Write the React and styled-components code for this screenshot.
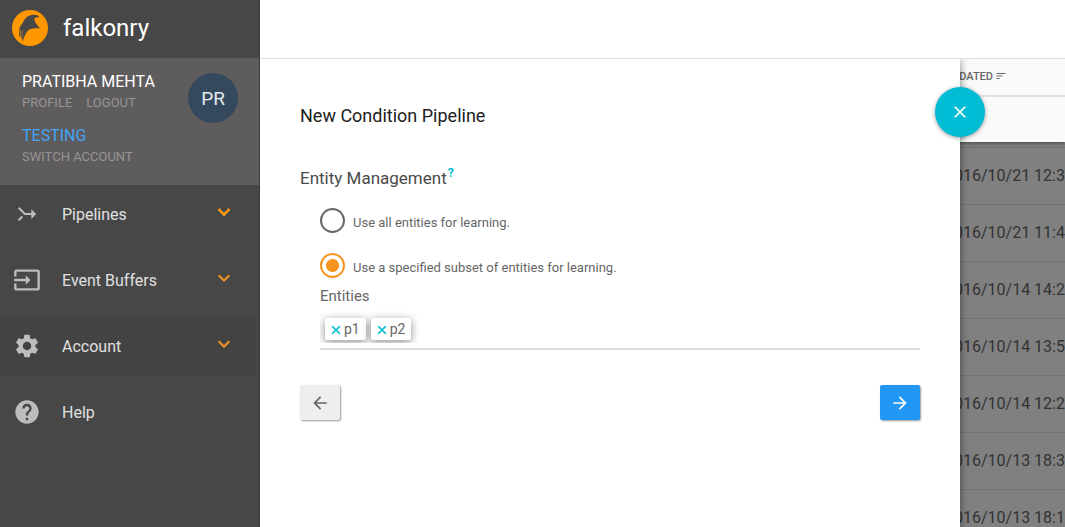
import React, { useState } from "react";
import styled, { createGlobalStyle, css } from "styled-components";
import {
  MdArrowBack,
  MdArrowForward,
  MdCallMerge,
  MdClose,
  MdExpandMore,
  MdHelp,
  MdInput,
  MdSettings,
  MdSort,
} from "react-icons/md";

const GlobalStyle = createGlobalStyle`
  *, *::before, *::after { box-sizing: border-box; }
  body {
    margin: 0;
    background: #fff;
    color: #4a4a4a;
    font-family: Roboto, "Liberation Sans", sans-serif;
    font-size: 16px;
  }
  button { font-family: inherit; border: 0; padding: 0; cursor: pointer; }
  a { text-decoration: none; }
  h1, h2, p { margin: 0; font-weight: 400; }
`;

const Shell = styled.div`
  display: flex;
  height: 100vh;
  overflow: hidden;
`;

const Sidebar = styled.aside`
  flex: 0 0 260px;
  background: #474747;
  border-right: 1px solid #3c3c3c;
`;

const Brand = styled.a`
  display: flex;
  align-items: center;
  gap: 15px;
  height: 58px;
  padding: 0 0 2px 12px;
  color: #fff;
  font-size: 24px;
`;

const Account = styled.section`
  display: flex;
  justify-content: space-between;
  height: 127px;
  padding: 14px 21px 0 22px;
  background: #5f5c5d;
`;

const AccountName = styled.p`
  color: #fff;
  font-size: 16px;
  line-height: 20px;
`;

const AccountLinks = styled.div`
  display: flex;
  gap: 14px;
  margin-bottom: 12px;
`;

const SmallLink = styled.a`
  color: #969495;
  font-size: 13px;
  line-height: 22px;
`;

const Tenant = styled(AccountName)`
  color: #42a5f5;
`;

const Avatar = styled.span`
  display: flex;
  align-items: center;
  justify-content: center;
  width: 50px;
  height: 50px;
  margin-top: 1px;
  border-radius: 50%;
  background: #34495e;
  color: #e4e8ec;
  font-size: 19px;
`;

const Nav = styled.nav`
  display: flex;
  flex-direction: column;
  gap: 8px;
`;

const NavItem = styled.a`
  display: grid;
  grid-template-columns: 28px 1fr 24px;
  column-gap: 21px;
  align-items: center;
  height: 58px;
  margin-right: 4px;
  padding: 0 19px 0 13px;
  border-radius: 2px;
  color: #e0e0e0;
  background: ${(p) => (p.$active ? "#434343" : "transparent")};
`;

const Caret = styled(MdExpandMore)`
  margin-bottom: 4px;
  color: #f7941e;
  ${(p) =>
    p.$bold &&
    css`
      path:last-child { stroke: #f7941e; stroke-width: 1px; }
    `}
`;

const NavIcon = styled.span`
  display: flex;
  justify-content: center;
  color: #bdbdbd;
  svg { transform: ${(p) => (p.$turned ? "rotate(90deg)" : "none")}; }
`;

const Main = styled.main`
  flex: 1;
  min-width: 0;
  display: flex;
  flex-direction: column;
`;

const TopBar = styled.header`
  flex: 0 0 59px;
  border-bottom: 1px solid #e0e0e0;
`;

const Workspace = styled.div`
  flex: 1;
  min-height: 0;
  display: flex;
`;

const Panel = styled.section`
  position: relative;
  z-index: 2;
  flex: 0 1 700px;
  padding: 44px 40px 0;
  background: #fff;
  clip-path: inset(0 -40px 0 0);
  box-shadow: 0 2px 8px rgba(0, 0, 0, 0.5);
`;

const CloseButton = styled.button`
  position: absolute;
  top: 28px;
  right: -25px;
  display: flex;
  align-items: center;
  justify-content: center;
  width: 50px;
  height: 50px;
  border-radius: 50%;
  background: #00bcd4;
  color: #fff;
  box-shadow: 0 1px 4px rgba(0, 0, 0, 0.4);
`;

const Title = styled.h1`
  color: #212121;
  font-size: 18px;
  line-height: 26px;
`;

const SectionTitle = styled.h2`
  display: flex;
  gap: 1px;
  margin-top: 36px;
  color: #4a4a4a;
  font-size: 17px;
  line-height: 26px;
`;

const HelpMark = styled.a`
  color: #00bcd4;
  font-size: 12px;
  font-weight: 700;
  line-height: 16px;
`;

const Fields = styled.div`
  display: flex;
  flex-direction: column;
  padding: 17px 0 0 20px;
`;

const Choice = styled.label`
  display: flex;
  align-items: center;
  gap: 8px;
  height: 25px;
  margin-bottom: ${(p) => (p.$last ? 8 : 20)}px;
  color: #666;
  font-size: 13px;
  line-height: 20px;

  span { padding-top: 4px; }
`;

const Radio = styled.input`
  appearance: none;
  flex: none;
  width: 25px;
  height: 25px;
  margin: 0;
  border: 2px solid #666;
  border-radius: 50%;

  &:checked {
    border-color: #f7941e;
    background: radial-gradient(circle, #f7941e 6px, transparent 7px);
  }
`;

const FieldLabel = styled.p`
  color: #666;
  font-size: 15px;
  line-height: 20px;
`;

const ChipField = styled.div`
  padding: 5px 0;
  border-bottom: 2px solid #dcdcdc;
`;

const Chips = styled.div`
  display: flex;
  gap: 5px;
  height: 32px;
  padding: 7px 5px 3px;
  overflow: hidden;
`;

const Chip = styled.span`
  display: flex;
  align-items: center;
  gap: 1px;
  padding: 0 6px 0 4px;
  border-radius: 2px;
  background: #fff;
  color: #666;
  font-size: 14px;
  box-shadow: 0 2px 8px rgba(0, 0, 0, 0.45);
`;

const ChipRemove = styled.button`
  display: flex;
  padding-top: 1px;
  background: none;
  color: #00bcd4;

  path:last-child { stroke: #00bcd4; stroke-width: 1px; }
`;

const Actions = styled.div`
  display: flex;
  justify-content: space-between;
  margin-top: 35px;
`;

const ActionButton = styled.button`
  display: flex;
  align-items: center;
  justify-content: center;
  width: 40px;
  height: 35px;
  border-radius: 2px;
  background: ${(p) => (p.$primary ? "#2196f3" : "#eee")};
  color: ${(p) => (p.$primary ? "#fff" : "#666")};
  box-shadow: 1px 1px 2px rgba(0, 0, 0, 0.4);
`;

const Backdrop = styled.div`
  flex: 1;
  min-width: 0;
  margin-left: -40px;
  overflow: hidden;
  background: #808080;
`;

const Listing = styled.table`
  width: 100%;
  border-collapse: separate;
  border-spacing: 0;
  white-space: nowrap;

  th, td { padding: 0 0 0 25px; text-align: left; }

  thead {
    position: relative;
    background: #fafafa;
    box-shadow: 0 1px 4px rgba(0, 0, 0, 0.5);
  }
  th {
    height: 38px;
    padding-bottom: 2px;
    border-bottom: 2px solid #e0e0e0;
    color: #666;
    font-size: 11px;
    font-weight: 500;
  }
  thead td { height: 45px; }
  tbody td {
    height: 57px;
    padding-bottom: 2px;
    border-top: 1px solid #747474;
    color: #333;
    font-size: 16px;
  }
  tbody tr:first-child td { height: 5px; border: 0; }
`;

const SortLabel = styled.span`
  display: flex;
  align-items: center;
  gap: 2px;
`;

const navItems = [
  { label: "Pipelines", icon: MdCallMerge, size: 26, turned: true, caret: true, bold: true },
  { label: "Event Buffers", icon: MdInput, size: 28, caret: true },
  { label: "Account", icon: MdSettings, size: 28, caret: true, active: true },
  { label: "Help", icon: MdHelp, size: 28 },
];

const dates = [
  "2016/10/21 12:3",
  "2016/10/21 11:4",
  "2016/10/14 14:2",
  "2016/10/14 13:5",
  "2016/10/14 12:2",
  "2016/10/13 18:3",
  "2016/10/13 18:1",
];

function Logo() {
  return (
    <svg width="36" height="36" viewBox="0 0 36 36" aria-hidden="true">
      <circle cx="18" cy="18" r="18" fill="#ff9800" />
      <path
        d="M26 5.500C20 3.500 14.500 6 12 10.500C10.500 13.500 9 15 7.500 17.500L7 27L8.500 25L9 29L10 27L10.500 31.500C12 27 14 22.500 16.500 20C20 18.300 24.500 18.200 28.300 18.400C25.500 15.500 22.800 12.500 22.300 9.500C22.300 7.500 24.500 6.800 27 7.600C26.900 6.700 26.600 6 26 5.500Z"
        fill="#474747"
      />
      <path d="M8.500 19.500L8.300 25M10.300 20.500L9.900 27.500" stroke="#ff9800" strokeWidth="0.500" />
    </svg>
  );
}

export default function App() {
  const [scope, setScope] = useState("subset");
  const [entities, setEntities] = useState(["p1", "p2"]);

  return (
    <>
      <GlobalStyle />
      <Shell>
        <Sidebar>
          <Brand href="#home">
            <Logo />
            falkonry
          </Brand>
          <Account>
            <div>
              <AccountName>PRATIBHA MEHTA</AccountName>
              <AccountLinks>
                <SmallLink href="#profile">PROFILE</SmallLink>
                <SmallLink href="#logout">LOGOUT</SmallLink>
              </AccountLinks>
              <Tenant>TESTING</Tenant>
              <SmallLink href="#switch">SWITCH ACCOUNT</SmallLink>
            </div>
            <Avatar>PR</Avatar>
          </Account>
          <Nav>
            {navItems.map(({ label, icon: Icon, size, turned, caret, bold, active }) => (
              <NavItem key={label} href={`#${label}`} $active={active}>
                <NavIcon $turned={turned}>
                  <Icon size={size} />
                </NavIcon>
                {label}
                {caret && <Caret size={24} $bold={bold} />}
              </NavItem>
            ))}
          </Nav>
        </Sidebar>
        <Main>
          <TopBar />
          <Workspace>
            <Panel>
              <CloseButton aria-label="Close">
                <MdClose size={20} />
              </CloseButton>
              <Title>New Condition Pipeline</Title>
              <SectionTitle>
                Entity Management
                <HelpMark href="#help">?</HelpMark>
              </SectionTitle>
              <Fields>
                <Choice>
                  <Radio
                    type="radio"
                    name="scope"
                    checked={scope === "all"}
                    onChange={() => setScope("all")}
                  />
                  <span>Use all entities for learning.</span>
                </Choice>
                <Choice $last>
                  <Radio
                    type="radio"
                    name="scope"
                    checked={scope === "subset"}
                    onChange={() => setScope("subset")}
                  />
                  <span>Use a specified subset of entities for learning.</span>
                </Choice>
                <FieldLabel id="entities">Entities</FieldLabel>
                <ChipField>
                  <Chips role="group" aria-labelledby="entities">
                    {entities.map((name) => (
                      <Chip key={name}>
                        <ChipRemove
                          aria-label={`Remove ${name}`}
                          onClick={() => setEntities(entities.filter((e) => e !== name))}
                        >
                          <MdClose size={14} />
                        </ChipRemove>
                        {name}
                      </Chip>
                    ))}
                  </Chips>
                </ChipField>
              </Fields>
              <Actions>
                <ActionButton aria-label="Back">
                  <MdArrowBack size={20} />
                </ActionButton>
                <ActionButton aria-label="Next" $primary>
                  <MdArrowForward size={20} />
                </ActionButton>
              </Actions>
            </Panel>
            <Backdrop>
              <Listing>
                <thead>
                  <tr>
                    <th>
                      <SortLabel>
                        UPDATED
                        <MdSort size={12} />
                      </SortLabel>
                    </th>
                  </tr>
                  <tr>
                    <td />
                  </tr>
                </thead>
                <tbody>
                  <tr>
                    <td />
                  </tr>
                  {dates.map((date) => (
                    <tr key={date}>
                      <td>{date}</td>
                    </tr>
                  ))}
                </tbody>
              </Listing>
            </Backdrop>
          </Workspace>
        </Main>
      </Shell>
    </>
  );
}
